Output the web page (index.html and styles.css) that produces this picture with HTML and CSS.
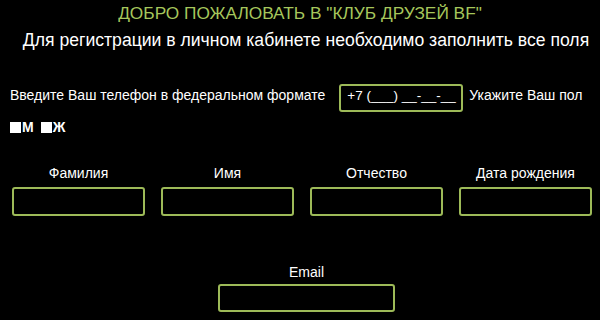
FILE: index.html
```html
<!DOCTYPE html>
<html lang="ru">
<head>
    <meta charset="UTF-8">
    <meta name="viewport" content="width=device-width, initial-scale=1.0">
    <title>Регистрация - Клуб друзей BF</title>
    <link rel="stylesheet" href="styles.css">
</head>
<body>

    <h1 class="title">ДОБРО ПОЖАЛОВАТЬ В "КЛУБ ДРУЗЕЙ BF"</h1>
    <p class="subtitle">Для регистрации в личном кабинете необходимо заполнить все поля</p>

    <!-- Телефон и пол -->
    <div class="phone-row">
        <label for="phone">Введите Ваш телефон в федеральном формате</label>
        <input type="text" id="phone" class="phone" value="+7 (___) __-__-__">
        <span>Укажите Ваш пол</span>
    </div>

    <div class="gender">
        <span class="box"></span><b>М</b>
        <span class="box"></span><b>Ж</b>
    </div>

    <!-- ФИО и дата -->
    <div class="fields">
        <div class="field">
            <label for="lastName">Фамилия</label>
            <input type="text" id="lastName">
        </div>
        <div class="field">
            <label for="firstName">Имя</label>
            <input type="text" id="firstName">
        </div>
        <div class="field">
            <label for="middleName">Отчество</label>
            <input type="text" id="middleName">
        </div>
        <div class="field">
            <label for="birthDate">Дата рождения</label>
            <input type="text" id="birthDate">
        </div>
    </div>

    <div class="email-row">
        <div class="field email">
            <label for="email">Email</label>
            <input type="text" id="email">
        </div>
    </div>

</body>
</html>
```

FILE: styles.css
```css
body {
    margin: 0;
    background-color: #000;
    color: #fff;
    font-family: "Liberation Sans", Arial, sans-serif;
    width: 600px;
}

.title {
    margin: 0;
    padding-top: 3px;
    text-align: center;
    font-size: 17.3px;
    font-weight: normal;
    line-height: 20px;
    color: #a6c75c;
}

.subtitle {
    margin: 7px 0 0;
    padding-left: 12px;
    text-align: center;
    font-size: 17.6px;
    line-height: 20px;
}

/* Телефон */
.phone-row {
    display: flex;
    align-items: baseline;
    margin-top: 34px;
    padding-left: 10px;
    font-size: 14px;
}

.phone-row label {
    margin-right: 14px;
}

input[type="text"] {
    box-sizing: border-box;
    background-color: #000;
    color: #fff;
    border: 2px solid #9dba58;
    border-radius: 3px;
    outline: none;
    font-family: inherit;
}

.phone {
    width: 124px;
    height: 28px;
    padding: 0 0 6px 6px;
    font-size: 13.5px;
    margin-right: 6px;
}

/* Пол */
.gender {
    display: flex;
    align-items: center;
    margin-top: 7px;
    padding-left: 10px;
    font-size: 14px;
    line-height: 16px;
}

.box {
    width: 11px;
    height: 11px;
    margin-right: 1px;
    background-color: #fff;
}

.gender b {
    margin-right: 7px;
}

/* Поля */
.fields {
    display: grid;
    grid-template-columns: repeat(4, 133px);
    gap: 16px;
    margin-top: 30px;
    padding-left: 12px;
}

.field {
    display: flex;
    flex-direction: column;
    align-items: center;
    gap: 6px;
    font-size: 14px;
}

.field input {
    width: 100%;
    height: 29px;
}

.email-row {
    display: flex;
    margin-top: 48px;
    padding-left: 218px;
}

.email {
    width: 177px;
    gap: 4px;
}

.email input {
    height: 28px;
}
```
